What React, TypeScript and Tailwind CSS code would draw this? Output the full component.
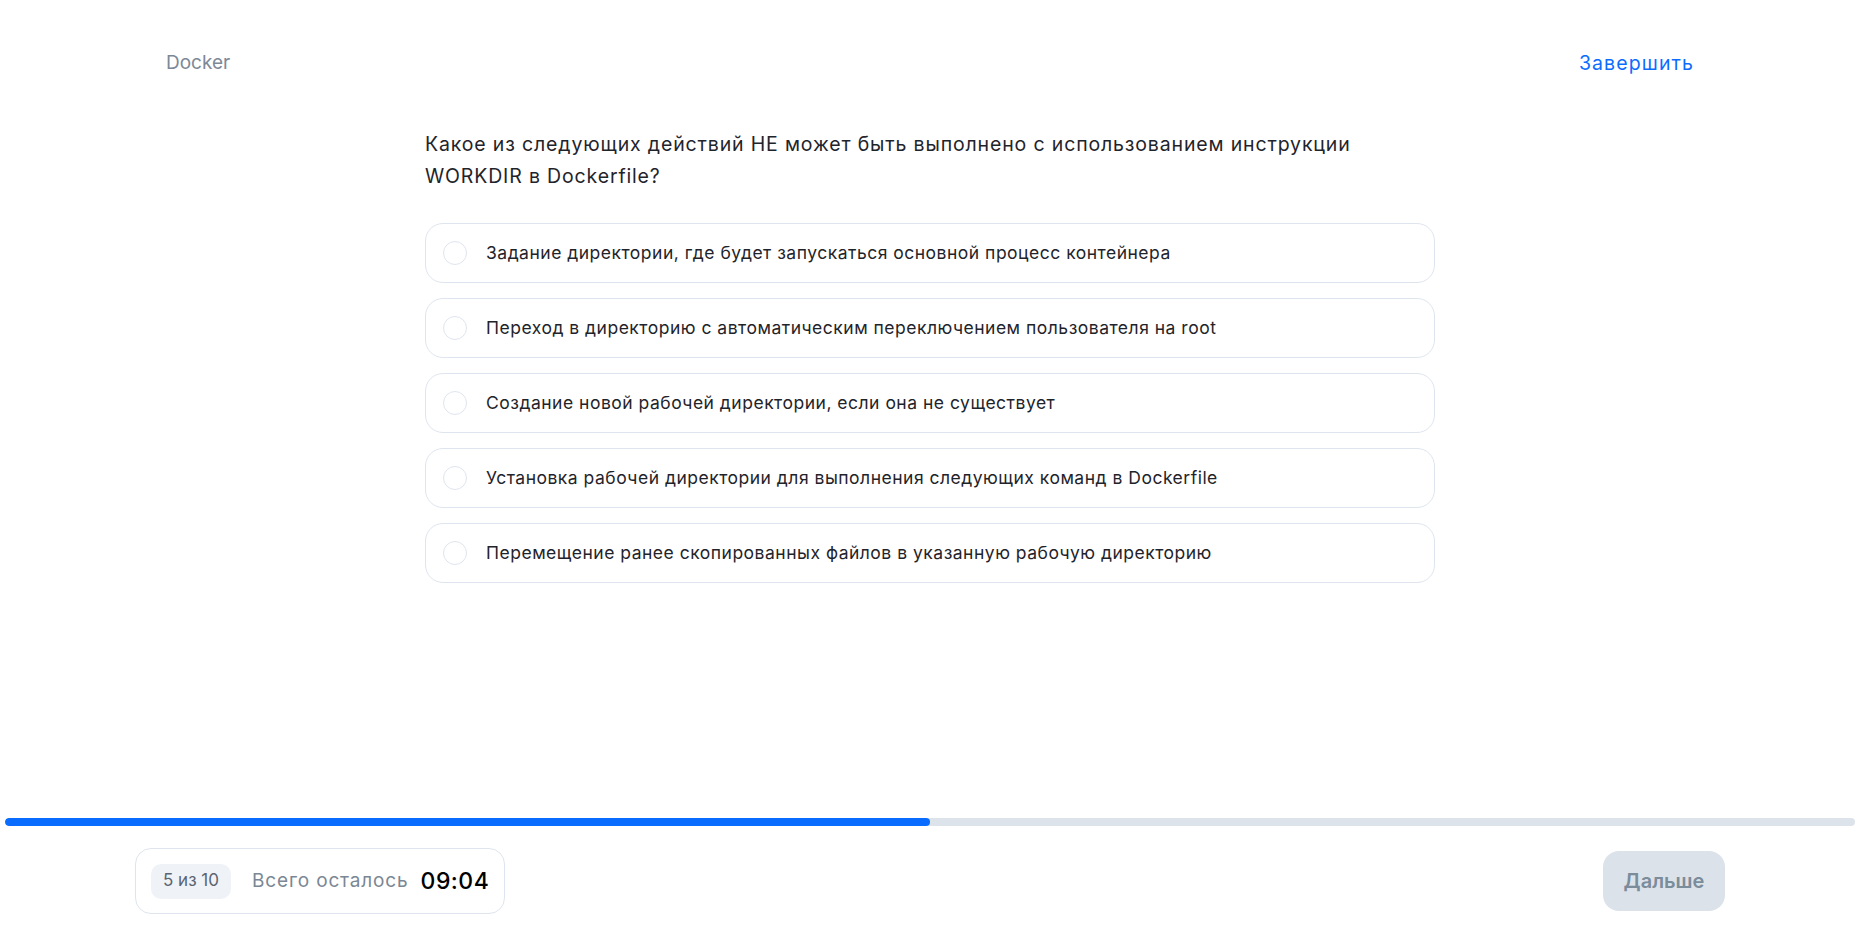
import React from "react";

const options = [
  "Задание директории, где будет запускаться основной процесс контейнера",
  "Переход в директорию с автоматическим переключением пользователя на root",
  "Создание новой рабочей директории, если она не существует",
  "Установка рабочей директории для выполнения следующих команд в Dockerfile",
  "Перемещение ранее скопированных файлов в указанную рабочую директорию",
];

export default function App() {
  return (
    <div
      className="h-screen w-full bg-white flex flex-col overflow-hidden"
      style={{ fontFamily: "Inter, 'Noto Sans', sans-serif" }}
    >
      <header className="flex justify-between items-center px-[166px] pt-[49px] h-[77px]">
        <span className="text-[19px] leading-[28px] text-[#7d8897]">Docker</span>
        <button className="text-[19.5px] leading-[28px] tracking-[1.1px] text-[#0b6cff]">Завершить</button>
      </header>

      <main className="flex-1">
        <div className="mx-auto w-[1010px] pt-[51px]">
          <h1 className="text-[19.5px] leading-[32px] tracking-[0.85px] text-[#1f242b] font-normal pr-[40px]">
            Какое из следующих действий НЕ может быть выполнено с использованием инструкции WORKDIR в Dockerfile?
          </h1>
          <div className="mt-[31px] flex flex-col gap-[15px]">
            {options.map((o) => (
              <label
                key={o}
                className="h-[60px] flex items-center pl-[17px] border border-[#dfe5ee] rounded-[18px] cursor-pointer"
              >
                <span className="w-[24px] h-[24px] rounded-full border-[1.5px] border-[#dfe5ee] shrink-0" />
                <span className="ml-[19px] text-[17.5px] tracking-[0.5px] text-[#1f242b]">{o}</span>
              </label>
            ))}
          </div>
        </div>
      </main>

      <footer className="shrink-0">
        <div className="mx-[5px] h-[8px] rounded-full bg-[#dde3ea] overflow-hidden">
          <div className="h-full rounded-full bg-[#0a6cff]" style={{ width: "50%" }} />
        </div>
        <div className="flex justify-between items-center px-[135px] pt-[22px] pb-[21px]">
          <div className="h-[66px] flex items-center px-[15px] border border-[#dfe5ee] rounded-[16px]">
            <span className="h-[35px] w-[80px] flex items-center justify-center rounded-[10px] bg-[#eff3f8] text-[17px] text-[#5b6470]">
              5 из 10
            </span>
            <span className="ml-[21px] text-[19px] tracking-[0.85px] text-[#7b8794]">Всего осталось</span>
            <span className="ml-[12px] text-[23px] tracking-[0.5px] font-medium text-black">09:04</span>
          </div>
          <button className="h-[60px] w-[122px] rounded-[16px] bg-[#dbe2ea] text-[20px] font-semibold text-[#7b8c9b]">
            Дальше
          </button>
        </div>
      </footer>
    </div>
  );
}
